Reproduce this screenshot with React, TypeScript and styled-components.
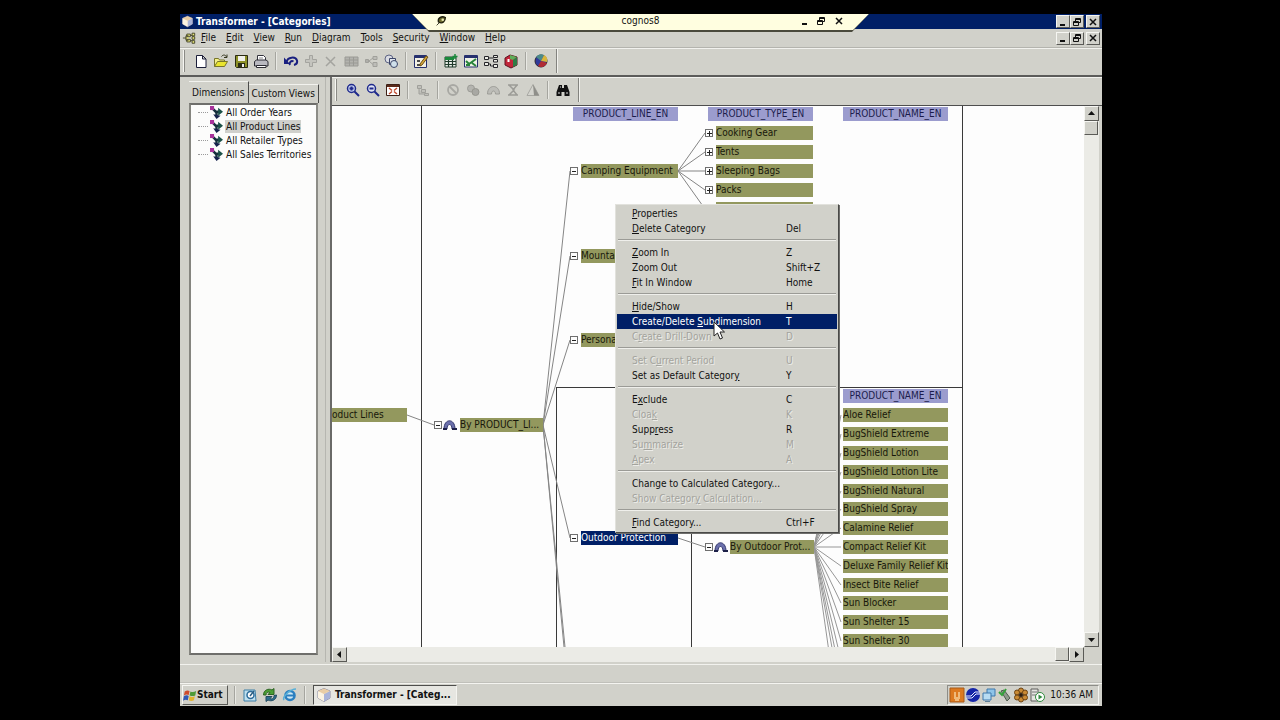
import React from "react";
import styled, { createGlobalStyle, css } from "styled-components";

const FACE = "#d1d1ca";
const NAVY = "#001f66";
const OLIVE = "#93985e";
const LILAC = "#9b9cce";

const GlobalStyle = createGlobalStyle`
  * { box-sizing: border-box; }
  body {
    margin: 0;
    background: #000;
    color: #111;
    font: 10px/14px "DejaVu Sans Condensed", "DejaVu Sans", "Liberation Sans", sans-serif;
  }
  button, input { font: inherit; color: inherit; }
  ul { list-style: none; margin: 0; padding: 0; }
  svg { display: block; flex: none; }
  u { text-decoration: underline; text-underline-offset: 1px; }
`;

const raised = css`
  border: 1px solid;
  border-color: #f6f6f2 #5a5a56 #5a5a56 #f6f6f2;
`;

const Backdrop = styled.main`
  display: flex;
  min-height: 100vh;
  padding: 14px 178px 14px 180px;
`;

const Desktop = styled.div`
  position: relative;
  display: flex;
  flex: 1;
  flex-direction: column;
  min-width: 0;
  background: ${FACE};
`;

const TitleBar = styled.header`
  display: flex;
  align-items: center;
  height: 15px;
  padding: 0 2px 0 1px;
  gap: 2px;
  background: ${NAVY};
  color: #fff;
`;

const WindowTitle = styled.h1`
  flex: 1;
  margin: 0;
  font-size: 10px;
  line-height: 14px;
  font-weight: 700;
`;

const CaptionButtons = styled.div`
  display: flex;
  button:last-child { margin-left: 2px; }
`;

const CaptionButton = styled.button<{ $flat?: boolean }>`
  display: grid;
  place-items: center;
  width: ${(p) => (p.$flat ? 16 : 14)}px;
  height: 13px;
  padding: 0;
  background: ${(p) => (p.$flat ? "transparent" : FACE)};
  color: #111;
  ${raised}
  ${(p) => p.$flat && "border: 0;"}
`;

const ConnectionEdge = styled.div`
  position: absolute;
  top: 0;
  left: 232px;
  right: 233px;
  height: 18px;
  background: #4a4a3c;
  clip-path: polygon(0 0, 100% 0, calc(100% - 17px) 100%, 17px 100%);
`;

const ConnectionBar = styled.div`
  display: grid;
  grid-template-columns: 1fr auto 1fr;
  align-items: center;
  height: 16px;
  padding: 0 22px 2px;
  background: #fffee0;
  clip-path: polygon(0 0, 100% 0, calc(100% - 16px) 100%, 16px 100%);
`;

const ConnectionPin = styled.button`
  display: flex;
  align-items: center;
  width: 22px;
  height: 14px;
  padding: 0;
  border: 0;
  background: none;
`;

const ConnectionActions = styled.div`
  display: flex;
  justify-content: flex-end;
`;

const MenuBar = styled.nav`
  display: flex;
  align-items: center;
  height: 19px;
  padding: 0 2px;
  border-bottom: 1px solid #b4b4ae;
`;

const MenuBarItem = styled.button`
  padding: 2px 5px;
  border: 0;
  background: none;
  line-height: 14px;
`;

const MenuBarList = styled.div`
  display: flex;
  flex: 1;
`;

const Toolbar = styled.div<{ $inner?: boolean }>`
  display: flex;
  align-items: center;
  height: ${(p) => (p.$inner ? 28 : 27)}px;
  padding: 0 0 ${(p) => (p.$inner ? 3 : 2)}px 3px;
  border-top: 1px solid #f2f2ee;
`;

const Grip = styled.span`
  width: 2px;
  height: 22px;
  margin-right: 6px;
  border-left: 1px solid #f6f6f2;
  border-right: 1px solid #8a8a85;
`;

const Divider = styled.span`
  width: 2px;
  height: 18px;
  margin: 0 4px;
  border-left: 1px solid #a5a59f;
  border-right: 1px solid #e9e9e4;
`;

const ToolEnd = styled.span`
  width: 2px;
  height: 24px;
  margin-left: 5px;
  border-left: 1px solid #83837e;
  border-right: 1px solid #f2f2ee;
`;

const ToolButton = styled.button`
  display: grid;
  place-items: center;
  width: 20px;
  height: 20px;
  padding: 0;
  border: 0;
  background: none;
`;

const Workspace = styled.div`
  display: flex;
  flex: 1;
  min-height: 0;
  padding-bottom: 2px;
  border-top: 2px solid #5c5c5a;
`;

const SidePanel = styled.aside`
  display: flex;
  flex-direction: column;
  width: 146px;
  padding: 4px 7px 7px 9px;
  border-right: 1px solid #b6b6b0;
`;

const Tabs = styled.div`
  display: flex;
  align-items: flex-end;
  height: 22px;
`;

const Tab = styled.button<{ $active?: boolean }>`
  height: ${(p) => (p.$active ? 22 : 19)}px;
  padding: 0 3px;
  border: 0;
  border-top: 1px solid #f2f2ee;
  border-right: 1px solid #4c4c4a;
  background: ${FACE};
  line-height: 16px;
  white-space: nowrap;
`;

const TreeBox = styled.ul`
  flex: 1;
  padding: 0 0 0 7px !important;
  background: #fcfcfb;
  border: 2px solid;
  border-color: #6e6e6b #8c8c86 #6e6e6b #85857f;
`;

const TreeRow = styled.li`
  display: flex;
  align-items: center;
  height: 14px;
  gap: 2px;
  &::before {
    content: "";
    width: 10px;
    border-top: 1px dotted #9a9a9a;
  }
`;

const TreeLabel = styled.button<{ $active?: boolean }>`
  padding: 0 1px;
  border: 0;
  background: ${(p) => (p.$active ? "#d0d0cc" : "none")};
  line-height: 13px;
  white-space: nowrap;
`;

const DiagramPanel = styled.section`
  display: flex;
  flex: 1;
  flex-direction: column;
  min-width: 0;
  margin-left: 4px;
  border-left: 2px solid #6a6a68;
`;

const ScrollGrid = styled.div`
  display: grid;
  flex: 1;
  grid-template: 1fr 15px / 1fr 15px;
  min-height: 0;
  padding-right: 3px;
  border-top: 1px solid #4e4e4e;
`;

const Canvas = styled.div`
  position: relative;
  overflow: hidden;
  background: #fdfdfd;
`;

const CanvasLines = styled.svg`
  position: absolute;
  inset: 0;
  width: 100%;
  height: 100%;
`;

const Node = styled.div<{ $x: number; $y: number; $w: number; $kind?: "header" | "selected" }>`
  position: absolute;
  left: ${(p) => p.$x}px;
  top: ${(p) => p.$y}px;
  width: ${(p) => p.$w}px;
  height: 14px;
  line-height: 14px;
  overflow: hidden;
  white-space: nowrap;
  text-align: ${(p) => (p.$kind === "header" ? "center" : "left")};
  color: ${(p) => (p.$kind === "selected" ? "#fff" : p.$kind === "header" ? "#1c1c4c" : "#17170a")};
  background: ${(p) => (p.$kind === "header" ? LILAC : p.$kind === "selected" ? NAVY : OLIVE)};
`;

const Track = styled.div<{ $row?: boolean }>`
  display: flex;
  flex-direction: ${(p) => (p.$row ? "row" : "column")};
  justify-content: space-between;
  background: #ebebe6;
`;

const TrackEnd = styled.div<{ $row?: boolean }>`
  display: flex;
  flex-direction: ${(p) => (p.$row ? "row" : "column")};
`;

const ScrollButton = styled.button`
  display: grid;
  place-items: center;
  width: 15px;
  height: 15px;
  padding: 0;
  background: ${FACE};
  ${raised}
`;

const Thumb = styled.span`
  width: 14px;
  height: 14px;
  background: ${FACE};
  ${raised}
`;

const StatusBar = styled.div`
  height: 19px;
  border-top: 1px solid #f2f2ee;
  border-bottom: 1px solid #c0c0ba;
`;

const Taskbar = styled.footer`
  display: flex;
  align-items: center;
  height: 23px;
  padding: 0 3px 0 2px;
  border-top: 1px solid #f4f4f0;
`;

const StartButton = styled.button`
  display: flex;
  align-items: center;
  width: 46px;
  height: 20px;
  padding: 0;
  background: ${FACE};
  font-weight: 700;
  ${raised}
`;

const QuickLaunch = styled.div`
  display: flex;
  align-items: center;
  margin: 0 3px 0 2px;
`;

const TaskButton = styled.button`
  display: flex;
  align-items: center;
  gap: 3px;
  width: 144px;
  height: 20px;
  padding: 1px 2px;
  background: #e6e6e1;
  border: 1px solid;
  border-color: #4e4e4c #f4f4f0 #f4f4f0 #4e4e4c;
  font-weight: 700;
  white-space: nowrap;
`;

const Tray = styled.div`
  display: flex;
  align-items: center;
  height: 20px;
  margin-left: auto;
  padding: 0 5px 0 1px;
  border: 1px solid;
  border-color: #8d8d88 #f4f4f0 #f4f4f0 #8d8d88;
`;

const Clock = styled.time`
  margin-left: 5px;
  white-space: nowrap;
`;

const ContextMenu = styled.ul`
  position: absolute;
  top: 190px;
  left: 435px;
  width: 224px;
  padding: 1px 1px 2px !important;
  background: ${FACE};
  border: 1px solid;
  border-color: #e2e2dd #4a4a48 #4a4a48 #e2e2dd;
  box-shadow: 1px 1px 0 #6f6f6c;
`;

const ContextItem = styled.button<{ $hot?: boolean }>`
  display: grid;
  grid-template-columns: 1fr 51px;
  width: 100%;
  height: 15px;
  padding: 0 0 0 15px;
  border: 0;
  background: ${(p) => (p.$hot ? NAVY : "none")};
  color: ${(p) => (p.$hot ? "#fff" : "#111")};
  line-height: 15px;
  text-align: left;
  white-space: nowrap;
  &:disabled { color: #a3a39d; text-shadow: 1px 1px 0 #ecece8; }
`;

const ContextRule = styled.li`
  height: 2px;
  margin: 3px 1px 4px;
  border-top: 1px solid #9b9b96;
  border-bottom: 1px solid #efefeb;
`;

const Pointer = styled.svg`
  position: absolute;
  top: 307px;
  left: 533px;
`;

/* ---------- drawings ---------- */

const Glyph = ({ children, size = 16 }: { children: React.ReactNode; size?: number }) => (
  <svg width={size} height={size} viewBox="0 0 16 16" fill="none" aria-hidden="true">{children}</svg>
);

const icons: Record<string, React.ReactNode> = {
  newFile: <path d="M3.500 2.500h6l3.500 3.500v8.500h-9.500zM9.500 2.500v3.500h3.500" fill="#fff" stroke="#1c1f3a" />,
  open: <><path d="M1.500 13.500v-8h4l1 1.500h5v2" fill="#f4f08a" stroke="#77752a" /><path d="M1.500 13.500l3-5h10l-3 5z" fill="#e9e52e" stroke="#77752a" /><path d="M8.500 3.500c1.500-2 4-2 5 .5M14 1.500v3h-3" stroke="#33351d" /></>,
  save: <><path d="M2.500 2.500h12v12h-11l-1-1z" fill="#8d9127" stroke="#2a2b12" /><path d="M5 3h7v5h-7z" fill="#f0f0ea" /><path d="M5 10h7v4h-7z" fill="#2b2d14" /><path d="M9 11h2v3h-2z" fill="#eee" /></>,
  print: <><path d="M4.500 8v-5.500h6l2 2v3.500" fill="#fff" stroke="#33333c" /><path d="M1.500 8.500l2-1.500h9.500l2 1.500v4.500h-13.500z" fill="#b9b9c0" stroke="#2b2b33" /><path d="M3.500 12.500h9.500v2h-9.500z" fill="#fff" stroke="#2b2b33" /><path d="M6 5h4" stroke="#888" /></>,
  undo: <><path d="M3.500 9c1-5 9-6 10.500-1.500.6 2.500-1 4-3 4.500M7 12c-1-2 1-5 3.500-3.500" stroke="#1a2080" strokeWidth="2" /><path d="M1 4.500v6.500h6z" fill="#1a2080" /></>,
  plus: <path d="M6.500 2.500h3v4h4v3h-4v4h-3v-4h-4v-3h4z" fill="#c4c4be" stroke="#a4a49f" />,
  cross: <path d="M3 4l9 9M12 4l-9 9" stroke="#a4a49f" strokeWidth="1.500" />,
  grid: <><path d="M2 4h13v9h-13z" fill="#b3b3ae" stroke="#9a9a95" /><path d="M2 7h13M2 10h13M6.500 4v9M10.500 4v9" stroke="#9a9a95" /></>,
  branch: <path d="M2 8h4M10 3.500h4v3h-4zM10 9.500h4v4h-4zM2.500 6.500h3v3h-3zM6 8l4-3M6 8l4 3.500" fill="#bdbdb8" stroke="#a0a09b" />,
  copies: <><circle cx="6" cy="6" r="4" fill="#d9dbe2" stroke="#5d6484" /><path d="M6.500 5.500h6v6h-6z" fill="#dfe5ee" stroke="#3c4668" /><circle cx="11" cy="11" r="3.500" fill="#cfe0ea" stroke="#3c4668" /></>,
  edit: <><path d="M1.500 2.500h12v12h-12z" fill="#f2f0e4" stroke="#26306e" /><path d="M2 3h11v2h-11z" fill="#26306e" /><path d="M4 7h3v2h-3zM4 11h4v2h-4z" fill="#4b4b4b" /><path d="M7 11l6-8 2 1-6 8-2 1z" fill="#d8a93a" stroke="#6b4e16" /></>,
  sheet: <><path d="M2 4h11v10h-11z" fill="#e8eee8" stroke="#1e3a2a" /><path d="M2 4h9v3h-9z" fill="#1b8a3c" /><path d="M2 8.500h11M2 11.500h11M5.500 7v7M9.500 7v7" stroke="#1e3a2a" strokeWidth="1.200" /><path d="M12 1v5M9.500 3.500h5" stroke="#1b8a3c" strokeWidth="1.500" /></>,
  check: <><path d="M1.500 2.500h13v11.500h-13z" fill="#eef2e6" stroke="#26306e" /><path d="M2 3h12v2h-12z" fill="#26306e" /><path d="M3 8l3 3 7-5M3 12h4M9 10l4 3" stroke="#27833a" strokeWidth="2" /></>,
  hierarchy: <path d="M1.500 3.500h4v3h-4zM1.500 9.500h4v3h-4zM10.500 2.500h4v2h-4zM10.500 6.500h4v2.500h-4zM10.500 11.500h4v3h-4zM5.500 5h5M5.500 11h2v2h3" fill="#ecece6" stroke="#26262a" />,
  cube: <><path d="M2 5l5-3 7 2v8l-6 3-6-3z" fill="#c2263a" stroke="#5e1220" /><path d="M7 2l7 2-4 3-3-1z" fill="#5fae58" /><path d="M10 7l4-3v8l-4 2z" fill="#2f7d46" /><path d="M4.500 6h2v3h-2z" fill="#fff" /></>,
  pie: <><circle cx="8" cy="8" r="6" fill="#303a9a" stroke="#2b2330" /><path d="M8 8l-5-4a6 6 0 0 1 8-2z" fill="#4a8a8a" /><path d="M8 8l3-6a6 6 0 0 1 3 7z" fill="#d8b53b" /><path d="M8 8l6 2a6 6 0 0 1-9 3z" fill="#b02c34" /></>,
  zoomIn: <><circle cx="6.500" cy="6.500" r="4" fill="#c6d0f0" stroke="#1f2a8c" strokeWidth="1.500" /><path d="M4.500 6.500h4M6.500 4.500v4M9.500 9.500l4.500 4.500" stroke="#1f2a8c" strokeWidth="2" /></>,
  zoomOut: <><circle cx="6.500" cy="6.500" r="4" fill="#dfe3f2" stroke="#1f2a8c" strokeWidth="1.500" /><path d="M4.500 6.500h4M9.500 9.500l4.500 4.500" stroke="#1f2a8c" strokeWidth="2" /></>,
  fit: <><path d="M1.500 2.500h13v11h-13z" fill="#fff" stroke="#3d2016" /><path d="M2 3h12v2h-12z" fill="#5b2a1a" /><path d="M4 6l3 2.500M12 6l-3 2.500M4 12l3-2.500M12 12l-3-2.500" stroke="#c0492c" strokeWidth="1.500" /></>,
  stack: <path d="M2.500 3.500h4v3h-4zM6.500 7.500h4v3h-4zM9.500 11.500h4v2h-4zM4 7v5h5" fill="#c0c0ba" stroke="#a0a09b" />,
  ban: <><circle cx="8" cy="8" r="5" stroke="#a8a8a3" strokeWidth="1.800" /><path d="M4.500 4.500l7 7" stroke="#a8a8a3" strokeWidth="1.800" /></>,
  blobs: <><circle cx="6" cy="6.500" r="3.500" fill="#b4b4af" stroke="#9c9c97" /><circle cx="10.500" cy="10" r="3.500" fill="#a8a8a3" stroke="#96968f" /></>,
  arc: <path d="M2.500 12c0-10 12-10 12 0h-4c0-4-4-4-4 0z" fill="#bdbdb8" stroke="#9c9c97" />,
  sigma: <path d="M3 3h10M3 13h10M4 3l5 5-5 5M12 3l-4 5 4 5" stroke="#9c9c97" strokeWidth="1.500" />,
  apex: <><path d="M2 13.500l6-11 6 11z" fill="#d4d4ce" stroke="#a8a8a3" /><path d="M8 2.500l6 11h-5z" fill="#8f8f8a" /></>,
  find: <><path d="M4 3h3v3h2v-3h3l2.500 7v4h-5v-4h-3v4h-5v-4z" fill="#111" /><path d="M3 11h2M11 11h2M5 5h1" stroke="#ddd" /></>,
  app: <><path d="M2 4l6-2.500 6 2.500v7l-6 3.500-6-3.500z" fill="#f3ead6" stroke="#8b8aa0" /><path d="M8 7l6-3v7l-6 3.500z" fill="#a9b4da" /><path d="M2 4l6 3v7.500l-6-3.500z" fill="#fbf3e2" /><path d="M2 4l6 3 6-3-6-2.500z" fill="#e9cda6" /></>,
  doc: <path d="M1 8h4M7.500 5.500h-3v5h3M5.500 3.500h4v3h-4zM5.500 9.500h4v3h-4zM11.500 2.500h3v3h-3zM11.500 6.500h3v3h-3zM11.500 11h3v3h-3zM9.500 5h2M9.500 11h2" fill="#e9e97a" stroke="#3c3c22" />,
  start: <><path d="M2 4c2-1.500 4-1.500 5.500-.5l-1 4.500c-1.500-1-3.500-1-5.500.5z" fill="#cf4b2c" /><path d="M8.500 4c2 1 4 1 6.500-.5l-1 5c-2 1-4 1-6.500 0z" fill="#4f9b38" /><path d="M1 9.500c2-1.500 4-1.500 5.500-.5l-1 5c-1.500-1-3.500-1-5.500.5z" fill="#3158b4" /><path d="M7.500 9.500c2 1 4 1 6 0l-1 4.500c-2 1-4 1-6 0z" fill="#e2b52f" /></>,
  desktopIcon: <><path d="M2 3h11l1 11h-12z" fill="#bfe0ef" stroke="#3c7fa6" /><circle cx="8.500" cy="8" r="3.500" stroke="#2c6c9a" strokeWidth="1.500" fill="#fff" /><path d="M8 9l4-5" stroke="#2b5d80" strokeWidth="1.500" /></>,
  refresh: <><path d="M1.500 8c0-5 5-7 8.500-5l2-1.500v6h-6l2-2c-2-1-4 0-4 2.500z" fill="#4b9e35" stroke="#2c6422" /><path d="M14.500 8c0 5-5 7-8.500 5l-2 1.500v-5h6l-2 2c2 1 4 0 4-3z" fill="#2f6f8e" stroke="#234b60" /></>,
  ie: <><circle cx="8" cy="8.500" r="4.500" stroke="#2a7fc0" strokeWidth="2.600" fill="#cfe8f4" /><path d="M4 8.500h9" stroke="#2a7fc0" strokeWidth="2" /><path d="M2 13c-2-3 6-11 12-11" stroke="#58b0d8" strokeWidth="1.500" /></>,
  orange: <><path d="M1 1h14v14h-14z" fill="#dd7a20" stroke="#a85a18" /><path d="M5 11h6M6 5v5M10 5v5M6 13h4" stroke="#f6cf98" strokeWidth="1.500" /></>,
  blueDisc: <><circle cx="8" cy="8" r="7" fill="#1626a8" /><path d="M1 9h5l4-4h5M1 11h6l4-4h4" stroke="#e8ecff" strokeWidth="1" /></>,
  monitors: <><path d="M6 2h8v7h-8z" fill="#8fc4e8" stroke="#3e78ac" /><path d="M2 6h8v7h-8z" fill="#b8dcf2" stroke="#3e78ac" /><path d="M4 14.500h5" stroke="#5d7f98" /></>,
  usb: <><path d="M4 4l3-1 6 8-3 3z" fill="#8f9a8c" stroke="#4d5a4c" /><path d="M2 5l3 3 4-6" stroke="#33a13a" strokeWidth="2" /></>,
  flower: <><g fill="#c98a34" stroke="#6d4312"><circle cx="8" cy="3.500" r="2.500" /><circle cx="8" cy="12.500" r="2.500" /><circle cx="4" cy="5.500" r="2.500" /><circle cx="12" cy="5.500" r="2.500" /><circle cx="4" cy="10.500" r="2.500" /><circle cx="12" cy="10.500" r="2.500" /></g><circle cx="8" cy="8" r="2" fill="#2c1c0c" /></>,
  server: <><path d="M2 2h7v12h-7z" fill="#e4e4e0" stroke="#5f5f5c" /><path d="M3 5h5M3 8h5" stroke="#777" /><circle cx="11" cy="10" r="4.500" fill="#fff" stroke="#2f8a3c" /><path d="M9.500 7.500l4 2.500-4 2.500z" fill="#2f8a3c" /></>,
  dimension: <><path d="M3 3l4 4h5M8 7v6" stroke="#16303c" strokeWidth="3" /><path d="M10 2l6 5-6 5z" fill="#1b5148" /><path d="M4 10l4 6 5-4z" fill="#16224c" /><path d="M0 0h5v5h-5z" fill="#a8329a" /></>,
  pin: <><path d="M3 13l3-3" stroke="#2b2b18" /><path d="M5 9c-1-5 4-7 8-5 0 4-3 8-8 5z" fill="#6b6a2c" stroke="#20200e" strokeWidth="1.500" /><circle cx="10" cy="6.500" r="1.500" fill="#e8e8b4" /></>,
};

const caption: Record<string, React.ReactNode> = {
  Minimize: <path d="M2 8h5" stroke="#111" strokeWidth="2" />,
  Restore: <path d="M3.500 1.500h5v4h-5zM3.500 2.500h5M1.500 4.500h5v4h-5zM1.500 5.500h5" fill="none" stroke="#111" />,
  Close: <path d="M2 2l6 6M8 2l-6 6" stroke="#111" strokeWidth="1.500" />,
};

const Captions = ({ flat, scope }: { flat?: boolean; scope: string }) => (
  <CaptionButtons>
    {Object.keys(caption).map((name) => (
      <CaptionButton key={name} $flat={flat} aria-label={`${name} ${scope}`}>
        <svg width="10" height="10" viewBox="0 0 10 10" aria-hidden="true">{caption[name]}</svg>
      </CaptionButton>
    ))}
  </CaptionButtons>
);

const Tools = ({ groups }: { groups: string[][] }) => (
  <>
    {groups.map((group, i) => (
      <React.Fragment key={i}>
        {i > 0 && <Divider />}
        {group.map((name) => (
          <ToolButton key={name} aria-label={name}><Glyph>{icons[name]}</Glyph></ToolButton>
        ))}
      </React.Fragment>
    ))}
  </>
);

const Arrow = ({ d }: { d: string }) => (
  <svg width="9" height="9" viewBox="0 0 9 9" aria-hidden="true"><path d={d} fill="#111" /></svg>
);

/* Marks the access key: the letter after "&" is underlined. */
const Keyed = ({ text }: { text: string }) => {
  const i = text.indexOf("&");
  if (i < 0) return <span>{text}</span>;
  return <span>{text.slice(0, i)}<u>{text[i + 1]}</u>{text.slice(i + 2)}</span>;
};

/* ---------- data ---------- */

const menus = ["&File", "&Edit", "&View", "&Run", "&Diagram", "&Tools", "&Security", "&Window", "&Help"];

const mainTools = [
  ["newFile", "open", "save", "print"],
  ["undo", "plus", "cross", "grid", "branch", "copies"],
  ["edit"],
  ["sheet", "check", "hierarchy", "cube"],
  ["pie"],
];

const diagramTools = [["zoomIn", "zoomOut", "fit"], ["stack"], ["ban", "blobs", "arc", "sigma", "apex"], ["find"]];

const dimensions = ["All Order Years", "All Product Lines", "All Retailer Types", "All Sales Territories"];

type Entry = { label: string; keys?: string; off?: boolean; hot?: boolean };
const contextGroups: Entry[][] = [
  [{ label: "&Properties" }, { label: "&Delete Category", keys: "Del" }],
  [{ label: "&Zoom In", keys: "Z" }, { label: "Zoom Out", keys: "Shift+Z" }, { label: "&Fit In Window", keys: "Home" }],
  [
    { label: "&Hide/Show", keys: "H" },
    { label: "Create/Delete &Subdimension", keys: "T", hot: true },
    { label: "C&reate Drill-Down", keys: "D", off: true },
  ],
  [{ label: "Set C&urrent Period", keys: "U", off: true }, { label: "Set as Default Categor&y", keys: "Y" }],
  [
    { label: "E&xclude", keys: "C" },
    { label: "Cloa&k", keys: "K", off: true },
    { label: "Supp&ress", keys: "R" },
    { label: "Su&mmarize", keys: "M", off: true },
    { label: "&Apex", keys: "A", off: true },
  ],
  [{ label: "Change to Calculated Category..." }, { label: "Show Categor&y Calculation...", off: true }],
  [{ label: "&Find Category...", keys: "Ctrl+F" }],
];

/* y is the middle of each category's bar on the canvas. */
const types = [
  { label: "Cooking Gear", y: 27 },
  { label: "Tents", y: 46 },
  { label: "Sleeping Bags", y: 65 },
  { label: "Packs", y: 84 },
  { label: "", y: 103 },
];

const lines = [
  { label: "Camping Equipment", y: 65 },
  { label: "Mountai", y: 150 },
  { label: "Persona", y: 234 },
  { label: "Outdoor Protection", y: 432 },
];

const products = [
  { label: "Aloe Relief", y: 309 },
  { label: "BugShield Extreme", y: 328 },
  { label: "BugShield Lotion", y: 347 },
  { label: "BugShield Lotion Lite", y: 366 },
  { label: "BugShield Natural", y: 385 },
  { label: "BugShield Spray", y: 403 },
  { label: "Calamine Relief", y: 422 },
  { label: "Compact Relief Kit", y: 441 },
  { label: "Deluxe Family Relief Kit", y: 460 },
  { label: "Insect Bite Relief", y: 479 },
  { label: "Sun Blocker", y: 497 },
  { label: "Sun Shelter 15", y: 516 },
  { label: "Sun Shelter 30", y: 535 },
];

const Expander = ({ x, y, open }: { x: number; y: number; open?: boolean }) => (
  <g transform={`translate(${x} ${y})`} shapeRendering="crispEdges">
    <path d="M.5.500h7v7h-7z" fill="#fdfdfd" stroke="#6f6f6f" />
    <path d={open ? "M2 4.500h4" : "M2 4.500h5M4.500 2v5"} stroke="#222" />
  </g>
);

const LevelArc = ({ x, y }: { x: number; y: number }) => (
  <g transform={`translate(${x} ${y})`}>
    <path d="M1 9c0-11 11-11 11 0h-3c0-6-5-6-5 0z" fill="#6b70ac" stroke="#34386e" />
    <path d="M0 8h4v2h-4zM9 8h5v2h-5z" fill="#1d2048" />
  </g>
);

const Diagram = () => (
  <Canvas>
    <CanvasLines aria-hidden="true">
      <g stroke="#3a3a3a" shapeRendering="crispEdges" fill="none">
        <path d="M89.500 600V0M630.500 0v600M224.500 600V281.500H630M359.500 281v320" />
      </g>
      <g stroke="#858585" fill="none">
        {lines.map((n) => <path key={n.y} d={`M211 319L238 ${n.y}`} />)}
        <path d="M211 319L233 541M211 319L232 541M75 309l27 10M346 432l27 9" />
        {types.map((n) => <path key={n.y} d={`M346 65L373 ${n.y}`} />)}
        {[...products.map((n) => n.y), 554, 573, 592, 630].map((y) => <path key={y} d={`M482 441L509 ${y}`} stroke="#979797" />)}
      </g>
      {types.map((n) => <Expander key={n.y} x={373} y={n.y - 4} />)}
      {lines.map((n) => <Expander key={n.y} x={238} y={n.y - 4} open />)}
      <Expander x={102} y={315} open />
      <Expander x={373} y={437} open />
      <LevelArc x={111} y={314} />
      <LevelArc x={382} y={436} />
    </CanvasLines>

    <Node $x={241} $y={1} $w={105} $kind="header">PRODUCT_LINE_EN</Node>
    <Node $x={376} $y={1} $w={105} $kind="header">PRODUCT_TYPE_EN</Node>
    <Node $x={511} $y={1} $w={105} $kind="header">PRODUCT_NAME_EN</Node>
    <Node $x={511} $y={283} $w={105} $kind="header">PRODUCT_NAME_EN</Node>
    <Node $x={0} $y={302} $w={75}>oduct Lines</Node>
    <Node $x={128} $y={312} $w={83}>By PRODUCT_LI...</Node>
    <Node $x={398} $y={434} $w={84}>By Outdoor Prot...</Node>
    {lines.map((n) => (
      <Node key={n.label} $x={249} $y={n.y - 7} $w={97} $kind={n.label === "Outdoor Protection" ? "selected" : undefined}>
        {n.label}
      </Node>
    ))}
    {types.map((n) => <Node key={n.y} $x={384} $y={n.y - 7} $w={97}>{n.label}</Node>)}
    {products.map((n) => <Node key={n.label} $x={511} $y={n.y - 7} $w={105}>{n.label}</Node>)}
  </Canvas>
);

export default function App() {
  return (
    <Backdrop>
      <GlobalStyle />
      <Desktop>
        <TitleBar>
          <Glyph size={13}>{icons.app}</Glyph>
          <WindowTitle>Transformer - [Categories]</WindowTitle>
          <Captions scope="window" />
        </TitleBar>

        <MenuBar>
          <Glyph size={14}>{icons.doc}</Glyph>
          <MenuBarList>
            {menus.map((m) => <MenuBarItem key={m}><Keyed text={m} /></MenuBarItem>)}
          </MenuBarList>
          <Captions scope="document" />
        </MenuBar>

        <Toolbar>
          <Grip />
          <Tools groups={mainTools} />
          <ToolEnd />
        </Toolbar>

        <Workspace>
          <SidePanel>
            <Tabs role="tablist">
              <Tab role="tab" aria-selected="true" $active>Dimensions</Tab>
              <Tab role="tab" aria-selected="false">Custom Views</Tab>
            </Tabs>
            <TreeBox>
              {dimensions.map((d) => (
                <TreeRow key={d}>
                  <Glyph size={13}>{icons.dimension}</Glyph>
                  <TreeLabel $active={d === "All Product Lines"}>{d}</TreeLabel>
                </TreeRow>
              ))}
            </TreeBox>
          </SidePanel>

          <DiagramPanel>
            <Toolbar $inner>
              <Grip />
              <Tools groups={diagramTools} />
              <ToolEnd />
            </Toolbar>
            <ScrollGrid>
              <Diagram />
              <Track>
                <TrackEnd>
                  <ScrollButton aria-label="Scroll up"><Arrow d="M1 6l3.500-4 3.500 4z" /></ScrollButton>
                  <Thumb />
                </TrackEnd>
                <ScrollButton aria-label="Scroll down"><Arrow d="M1 3l3.500 4 3.500-4z" /></ScrollButton>
              </Track>
              <Track $row>
                <ScrollButton aria-label="Scroll left"><Arrow d="M6 1l-4 3.500 4 3.500z" /></ScrollButton>
                <TrackEnd $row>
                  <Thumb />
                  <ScrollButton aria-label="Scroll right"><Arrow d="M3 1l4 3.500-4 3.500z" /></ScrollButton>
                </TrackEnd>
              </Track>
            </ScrollGrid>
          </DiagramPanel>
        </Workspace>

        <StatusBar />

        <Taskbar>
          <StartButton><Glyph size={14}>{icons.start}</Glyph>Start</StartButton>
          <QuickLaunch>
            <Divider />
            <ToolButton aria-label="Show desktop"><Glyph>{icons.desktopIcon}</Glyph></ToolButton>
            <ToolButton aria-label="Synchronize"><Glyph>{icons.refresh}</Glyph></ToolButton>
            <ToolButton aria-label="Browser"><Glyph>{icons.ie}</Glyph></ToolButton>
            <Divider />
          </QuickLaunch>
          <TaskButton><Glyph>{icons.app}</Glyph>Transformer - [Categ...</TaskButton>
          <Tray>
            {["orange", "blueDisc", "monitors", "usb", "flower", "server"].map((n) => (
              <Glyph key={n}>{icons[n]}</Glyph>
            ))}
            <Clock>10:36 AM</Clock>
          </Tray>
        </Taskbar>

        <ConnectionEdge>
          <ConnectionBar>
            <ConnectionPin aria-label="Pin connection bar"><Glyph size={14}>{icons.pin}</Glyph></ConnectionPin>
            <span>cognos8</span>
            <ConnectionActions><Captions flat scope="connection" /></ConnectionActions>
          </ConnectionBar>
        </ConnectionEdge>

        <ContextMenu role="menu">
          {contextGroups.map((group, i) => (
            <React.Fragment key={i}>
              {i > 0 && <ContextRule role="separator" />}
              {group.map((e) => (
                <li key={e.label} role="none">
                  <ContextItem role="menuitem" disabled={e.off} $hot={e.hot}>
                    <Keyed text={e.label} />
                    <span>{e.keys}</span>
                  </ContextItem>
                </li>
              ))}
            </React.Fragment>
          ))}
        </ContextMenu>

        <Pointer width="12" height="20" viewBox="0 0 12 20" aria-hidden="true">
          <path d="M1 1v14l3.500-3 2.500 6 2.500-1-2.500-6h4.500z" fill="#fff" stroke="#222" />
        </Pointer>
      </Desktop>
    </Backdrop>
  );
}
